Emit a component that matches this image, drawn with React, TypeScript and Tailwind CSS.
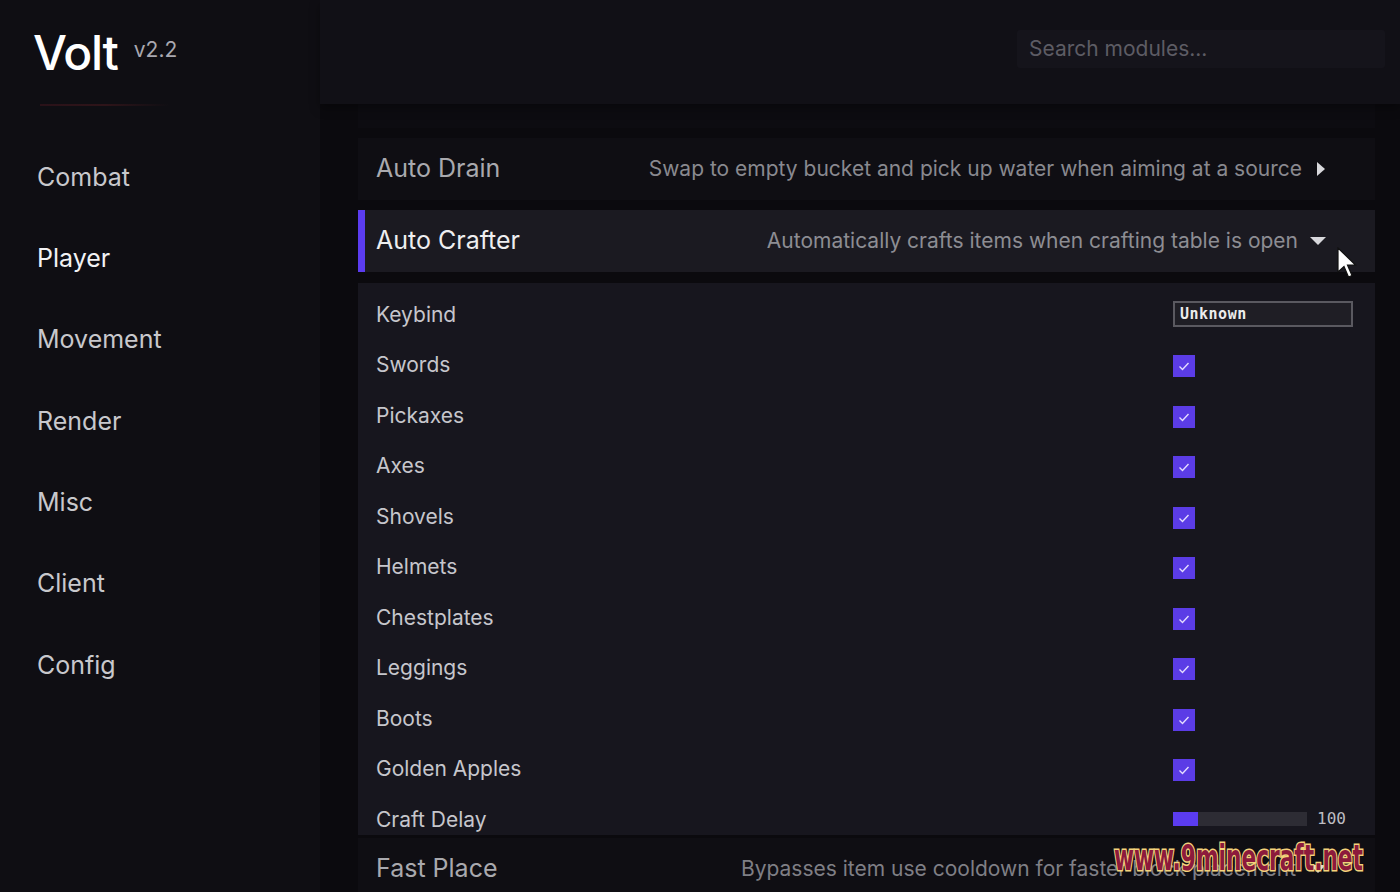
import React from "react"

const categories = ["Combat", "Player", "Movement", "Render", "Misc", "Client", "Config"]

const checkSettings = [
  "Swords",
  "Pickaxes",
  "Axes",
  "Shovels",
  "Helmets",
  "Chestplates",
  "Leggings",
  "Boots",
  "Golden Apples",
]

const Check = () => (
  <div className="w-[22px] h-[22px] bg-[#5b3ce6] flex items-center justify-center">
    <svg width="14" height="14" viewBox="0 0 14 14" fill="none">
      <polyline points="2.5,7.5 5.5,10.5 11.5,4" stroke="#e4dcff" strokeWidth="1.4" />
    </svg>
  </div>
)

const TriRight = () => (
  <svg width="10" height="14" viewBox="0 0 10 14">
    <path d="M1 0 L9 7 L1 14 Z" fill="#d8d8dc" />
  </svg>
)

const TriDown = () => (
  <svg width="16" height="10" viewBox="0 0 16 10">
    <path d="M0 1 L16 1 L8 9 Z" fill="#d8d8dc" />
  </svg>
)

const SettingRow = ({ label, children }: { label: string; children: React.ReactNode }) => (
  <div className="h-[50.5px] flex items-center justify-between pl-[18px] pr-[22px] shrink-0">
    <span className="text-[21px] text-[#c6c6cc]">{label}</span>
    <div className="w-[180px] flex items-center">{children}</div>
  </div>
)

export default function App() {
  return (
    <div
      className="relative w-[1400px] h-[892px] flex overflow-hidden bg-[#0b0a0e]"
      style={{ fontFamily: "Inter, 'Liberation Sans', sans-serif" }}
    >
      {/* Sidebar */}
      <aside className="w-[320px] shrink-0 bg-[#0f0e13] flex flex-col">
        <div className="h-[104px] flex items-start pl-[33px] pt-[25px]">
          <span className="text-[48px] leading-[56px] font-medium text-white tracking-tight">Volt</span>
          <span className="text-[21px] leading-none text-[#a9a8b0] ml-[16px] mt-[14px]">v2.2</span>
        </div>
        <div className="ml-[40px] w-[130px] h-[2px] bg-gradient-to-r from-[#2a1219] via-[#2e1419] to-transparent" />
        <nav className="flex flex-col pl-[37px] pt-[31px]">
          {categories.map((c) => (
            <div
              key={c}
              className={`h-[81.3px] flex items-center text-[25px] ${
                c === "Player" ? "text-[#f2f2f4]" : "text-[#c8c8cc]"
              }`}
            >
              {c}
            </div>
          ))}
        </nav>
      </aside>

      {/* Main */}
      <main className="flex-1 flex flex-col min-w-0">
        <header className="h-[104px] shrink-0 bg-[#111016] flex items-start justify-end pt-[30px] pr-[15px] shadow-[0_4px_10px_rgba(0,0,0,0.35)] z-10">
          <div className="w-[368px] h-[38px] bg-[#15141b] rounded-[3px] flex items-center px-[12px]">
            <span className="text-[21px] text-[#5d5c64]">Search modules...</span>
          </div>
        </header>

        <div className="flex-1 overflow-hidden pl-[38px] pr-[25px]">
          <div className="flex flex-col">
            <div className="h-[62px] mt-[-38px] bg-[#0d0c11] shrink-0" />

            <div className="h-[62px] mt-[10px] bg-[#0f0e13] flex items-center justify-between pl-[18px] pr-[49px] shrink-0">
              <span className="text-[25px] text-[#a9a9ae]">Auto Drain</span>
              <div className="flex items-center gap-[14px]">
                <span className="text-[21px] text-[#89898f]">
                  Swap to empty bucket and pick up water when aiming at a source
                </span>
                <TriRight />
              </div>
            </div>

            <div className="h-[62px] mt-[10px] bg-[#1b1a21] flex items-center justify-between pr-[49px] shrink-0">
              <div className="flex items-center h-full">
                <div className="w-[7px] h-full bg-[#5b3cf0]" />
                <span className="text-[25px] text-[#eeeef0] ml-[11px]">Auto Crafter</span>
              </div>
              <div className="flex items-center gap-[12px]">
                <span className="text-[21px] text-[#8d8d93]">
                  Automatically crafts items when crafting table is open
                </span>
                <TriDown />
              </div>
            </div>

            <div className="h-[552px] mt-[11px] bg-[#17161e] overflow-hidden flex flex-col pt-[6px] shrink-0">
              <SettingRow label="Keybind">
                <div className="w-[180px] h-[26px] border-2 border-[#5a5960] bg-[#1f1e25] flex items-center px-[5px]">
                  <span
                    className="text-[15px] font-bold text-[#ececec] tracking-[0.5px]"
                    style={{ fontFamily: "'DejaVu Sans Mono', monospace" }}
                  >
                    Unknown
                  </span>
                </div>
              </SettingRow>
              {checkSettings.map((s) => (
                <SettingRow key={s} label={s}>
                  <div className="mt-[3px]">
                    <Check />
                  </div>
                </SettingRow>
              ))}
              <SettingRow label="Craft Delay">
                <div className="flex items-center gap-[10px]">
                  <div className="w-[134px] h-[14px] bg-[#2d2c34] flex">
                    <div className="w-[25px] h-full bg-[#5b3cf0]" />
                  </div>
                  <span
                    className="text-[16px] text-[#bdbdc2]"
                    style={{ fontFamily: "'DejaVu Sans Mono', monospace" }}
                  >
                    100
                  </span>
                </div>
              </SettingRow>
            </div>

            <div className="h-[62px] mt-[3px] bg-[#0f0e13] flex items-center justify-between pl-[18px] pr-[49px] shrink-0">
              <span className="text-[25px] text-[#a9a9ae]">Fast Place</span>
              <div className="flex items-center gap-[14px]">
                <span className="text-[21px] text-[#7f7f85]">
                  Bypasses item use cooldown for faster block placement
                </span>
                <TriDown />
              </div>
            </div>
          </div>
        </div>
      </main>

      {/* Mouse cursor */}
      <svg className="absolute left-[1337px] top-[247px]" width="22" height="34" viewBox="0 0 22 34">
        <path d="M1 1 L1 25 L7 19.5 L11.5 30 L15 28.5 L10.5 18 L18.5 18 Z" fill="#ffffff" stroke="#111" strokeWidth="1.2" />
      </svg>

      {/* Watermark */}
      <div
        className="absolute left-[1114px] top-[837px] text-[36px] leading-[42px] font-bold text-[#8c1a3c] origin-left scale-x-[0.67] [-webkit-text-stroke:3px_#f4d37c] [paint-order:stroke_fill] whitespace-nowrap"
        style={{ fontFamily: "'DejaVu Sans Condensed', 'DejaVu Sans', sans-serif" }}
      >
        www.9minecraft.net
      </div>
    </div>
  )
}
